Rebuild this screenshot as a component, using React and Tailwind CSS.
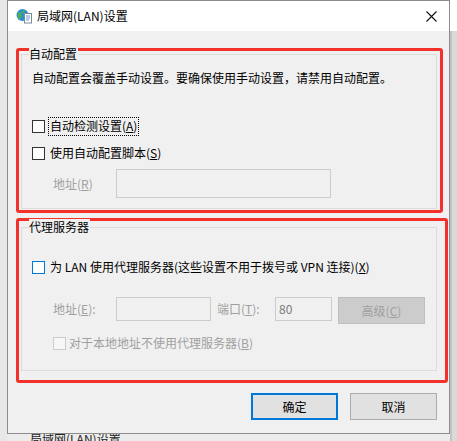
function Box({ blue, disabled }) {
  return (
    <span
      className={
        'inline-block w-[13px] h-[13px] shrink-0 border ' +
        (blue ? 'border-[#0078d7] bg-white' : disabled ? 'border-[#cccccc] bg-[#f7f7f7]' : 'border-[#333333] bg-white')
      }
    />
  );
}

function GlobeIcon() {
  return (
    <svg width="16" height="16" viewBox="0 0 16 16">
      <circle cx="6.5" cy="7" r="6" fill="#2b8fd6" />
      <path d="M2 4.5c1.5-.5 2.5.5 3.5 0s1-2 2.5-2.5c1 .8 1 2 0 2.8-1 .6-2.5.2-3 1.4-.4 1 1 1.6.6 2.8-.3 1-1.6 1.2-2.2 2.5C2.2 10.300.8 6.600 2 4.500z" fill="#4caf50" />
      <rect x="8.5" y="5.5" width="7" height="9.5" fill="#ffffff" stroke="#7a8a9a" />
      <path d="M10 8h4M10 10h4M10 12h3" stroke="#6b9bd1" strokeWidth="1" />
    </svg>
  );
}

export default function App() {
  return (
    <div className="w-[457px] h-[441px] overflow-hidden bg-[#ececec] text-[12px] leading-[16px] text-black [font-family:'Noto_Sans_CJK_SC','Microsoft_YaHei',sans-serif]">
      <div className="flex">
        <div className="w-[7px] h-[441px] bg-[#e8e8e8]" />
        {/* 窗口 */}
        <div className="relative z-10 w-[443px] h-[434px] border border-[#8c8c8c] bg-[#f0f0f0] flex flex-col">
          {/* 标题栏 */}
          <div className="h-[30px] bg-white flex items-center pl-[8px] pr-[12px] shrink-0">
            <GlobeIcon />
            <span className="ml-[5px] text-[12px]">局域网(LAN)设置</span>
            <svg className="ml-auto" width="11" height="11" viewBox="0 0 11 11">
              <path d="M0.5 0.5l10 10M10.5 0.5l-10 10" stroke="#111" strokeWidth="1.1" />
            </svg>
          </div>

          {/* 自动配置 */}
          <div className="ml-[8px] mt-[17px] w-[427px] h-[165px] border-[3px] border-[#f3312b] rounded-[3px] shrink-0">
            <div className="relative ml-[2px] mt-[3px] w-[416px] h-[155px] border border-[#dcdcdc]">
              <span className="absolute left-[7px] -top-[9px] bg-[#f0f0f0] pr-[1px]">自动配置</span>
              <div className="flex flex-col pl-[10px] pt-[15px]">
                <div>自动配置会覆盖手动设置。要确保使用手动设置，请禁用自动配置。</div>
                <div className="mt-[30px] h-[20px] flex items-center">
                  <Box />
                  <span className="ml-[3px] h-[19px] flex items-center border border-dotted border-black px-[1px]">
                    自动检测设置(<u>A</u>)
                  </span>
                </div>
                <div className="mt-[7px] h-[20px] flex items-center">
                  <Box />
                  <span className="ml-[4px] px-[1px]">
                    使用自动配置脚本(<u>S</u>)
                  </span>
                </div>
                <div className="mt-[6px] h-[29px] flex items-center">
                  <span className="ml-[21px] w-[63px] text-[#a0a0a0]">
                    地址(<u>R</u>)
                  </span>
                  <div className="w-[215px] h-[29px] border border-[#cccccc] bg-[#f0f0f0]" />
                </div>
              </div>
            </div>
          </div>

          {/* 代理服务器 */}
          <div className="ml-[8px] mt-[5px] w-[432px] h-[165px] border-[3px] border-[#f3312b] rounded-[3px] shrink-0">
            <div className="relative ml-[2px] mt-[6px] w-[416px] h-[144px] border border-[#dcdcdc]">
              <span className="absolute left-[7px] -top-[9px] bg-[#f0f0f0] pr-[1px]">代理服务器</span>
              <div className="flex flex-col pl-[10px] pt-[29px]">
                <div className="h-[20px] flex items-center">
                  <Box blue />
                  <span className="ml-[4px] px-[1px]">
                    为 LAN 使用代理服务器(这些设置不用于拨号或 VPN 连接)(<u>X</u>)
                  </span>
                </div>
                <div className="mt-[20px] h-[27px] flex items-start text-[#a0a0a0]">
                  <span className="ml-[21px] w-[63px] h-[24px] flex items-center">
                    地址(<u>E</u>):
                  </span>
                  <div className="w-[95px] h-[24px] border border-[#cccccc] bg-[#f0f0f0]" />
                  <span className="ml-[6px] w-[58px] h-[24px] flex items-center">
                    端口(<u>T</u>):
                  </span>
                  <div className="w-[57px] h-[24px] border border-[#cccccc] bg-[#f0f0f0] pl-[3px] flex items-center text-[#7a7a7a]">
                    80
                  </div>
                  <div className="ml-[6px] w-[87px] h-[27px] border border-[#bfbfbf] bg-[#cccccc] flex items-center justify-center">
                    高级(<u>C</u>)
                  </div>
                </div>
                <div className="mt-[9px] h-[20px] flex items-center pl-[21px]">
                  <Box disabled />
                  <span className="ml-[3px] text-[#a0a0a0]">
                    对于本地地址不使用代理服务器(<u>B</u>)
                  </span>
                </div>
              </div>
            </div>
          </div>

          {/* 按钮 */}
          <div className="mt-[10px] flex justify-end gap-[12px] pr-[12px]">
            <button className="w-[87px] h-[27px] border-2 border-[#0078d7] bg-[#e1e1e1] flex items-center justify-center">
              确定
            </button>
            <button className="w-[87px] h-[27px] border border-[#adadad] bg-[#e1e1e1] flex items-center justify-center">
              取消
            </button>
          </div>
        </div>
        <div className="w-[7px] h-[441px] flex flex-col">
          <div className="h-[31px] bg-white" />
          <div className="flex-1 bg-[#dadada] border-l-2 border-[#c4c4c4]" />
        </div>
      </div>
      <div className="relative -mt-[10px] pl-[30px] text-[#222]">局域网(LAN)设置</div>
    </div>
  );
}
